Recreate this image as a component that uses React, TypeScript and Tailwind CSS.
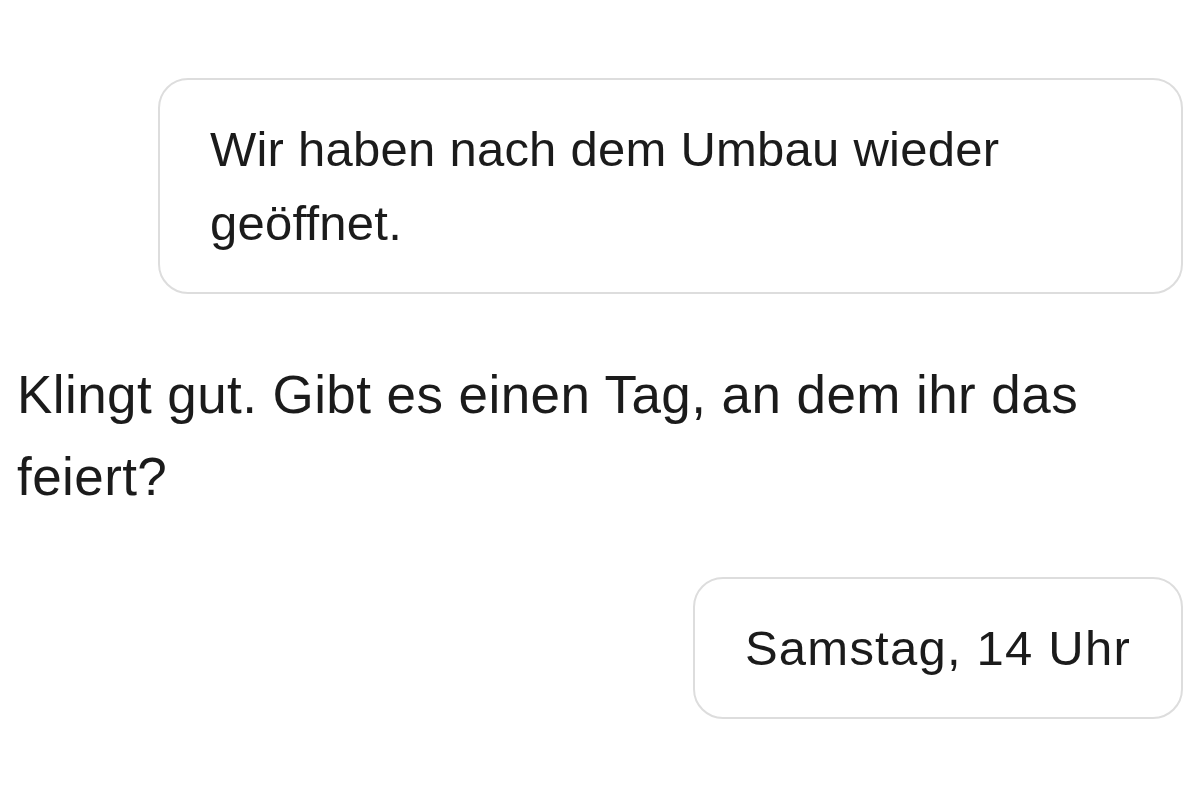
export default function App() {
  return (
    <div className="min-h-screen bg-white px-[17px] pt-[78px] pb-[80px] text-[#1b1b1b] font-['Liberation_Sans',Arial,sans-serif]">
      <div className="flex flex-col">
        {/* outgoing */}
        <div className="self-end max-w-[1025px] rounded-[30px] border-2 border-[#dddddd] bg-white px-[50px] py-[32px] text-[49px] leading-[74px] tracking-[0.005em]">
          Wir haben nach dem Umbau wieder geöffnet.
        </div>

        {/* incoming */}
        <p className="mt-[60px] text-[53px] leading-[82px] tracking-[0.008em]">
          Klingt gut. Gibt es einen Tag, an dem ihr das feiert?
        </p>

        {/* outgoing */}
        <div className="mt-[59px] self-end max-w-[1025px] rounded-[30px] border-2 border-[#dddddd] bg-white px-[50px] py-[32px] text-[49px] leading-[74px] tracking-[0.025em]">
          Samstag, 14 Uhr
        </div>
      </div>
    </div>
  );
}
